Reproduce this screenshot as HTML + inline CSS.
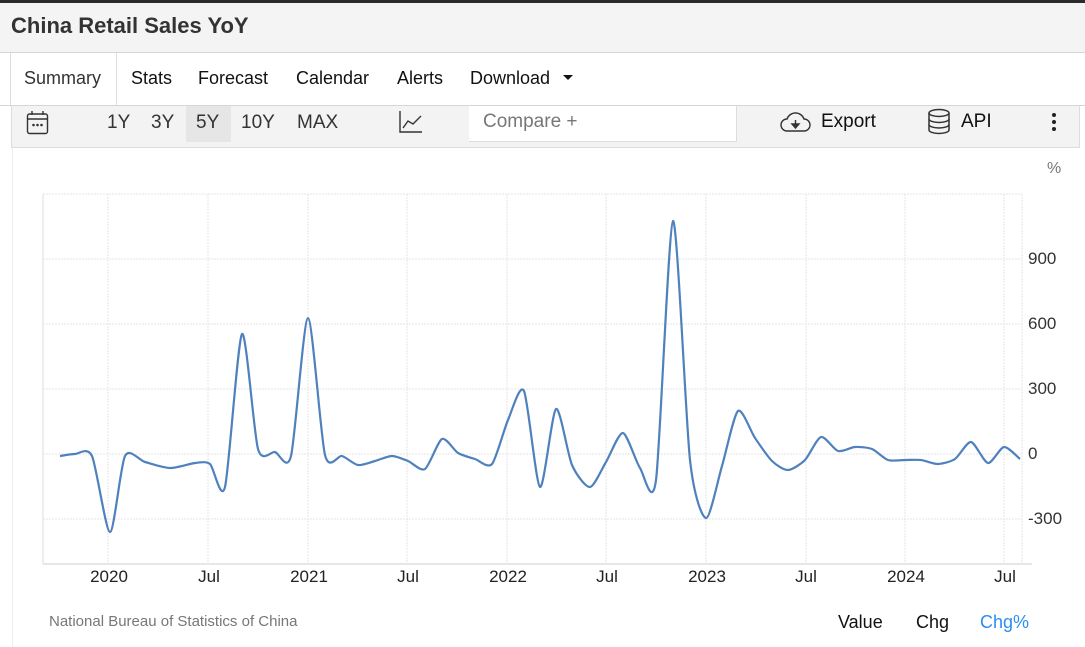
<!DOCTYPE html>
<html><head><meta charset="utf-8"><style>
*{margin:0;padding:0;box-sizing:border-box}
body{width:1085px;height:647px;background:#fff;font-family:"Liberation Sans",Arial,sans-serif;position:relative;overflow:hidden;color:#111}
.abs{position:absolute;white-space:nowrap}
</style></head><body>
<div class="abs" style="left:0;top:0;width:1085px;height:3px;background:#2b2b2b"></div>
<div class="abs" style="left:0;top:3px;width:1085px;height:50px;background:#f4f4f4;border-bottom:1px solid #d6d6d6"></div>
<div class="abs" style="left:11px;top:13px;font-size:22px;font-weight:bold;color:#333">China Retail Sales YoY</div>
<div class="abs" style="left:10px;top:53px;width:107px;height:53px;background:#fff;border-left:1px solid #ddd;border-right:1px solid #ddd"></div>
<div class="abs" style="left:0;top:105px;width:1085px;height:1px;background:#d6d6d6"></div>
<div class="abs" style="left:24px;top:68px;font-size:18px;color:#333">Summary</div>
<div class="abs" style="left:131px;top:68px;font-size:18px">Stats</div>
<div class="abs" style="left:198px;top:68px;font-size:18px">Forecast</div>
<div class="abs" style="left:296px;top:68px;font-size:18px">Calendar</div>
<div class="abs" style="left:397px;top:68px;font-size:18px">Alerts</div>
<div class="abs" style="left:470px;top:68px;font-size:18px">Download</div>
<div class="abs" style="left:563px;top:75px;width:0;height:0;border-left:5px solid transparent;border-right:5px solid transparent;border-top:5px solid #111"></div>
<div class="abs" style="left:11px;top:106px;width:1069px;height:42px;background:#f3f3f3;border:1px solid #ddd;border-top:none"></div>
<svg class="abs" style="left:26px;top:110px" width="24" height="26" viewBox="0 0 24 26" fill="none" stroke="#333" stroke-width="1.4"><rect x="1.5" y="4" width="20" height="19.5" rx="2"/><line x1="1.5" y1="9" x2="21.5" y2="9"/><line x1="6" y1="1" x2="6" y2="5"/><line x1="17" y1="1" x2="17" y2="5"/><circle cx="7.5" cy="15" r=".6" fill="#333"/><circle cx="11.5" cy="15" r=".6" fill="#333"/><circle cx="15.5" cy="15" r=".6" fill="#333"/></svg>
<div class="abs" style="left:186px;top:106px;width:45px;height:36px;background:#e6e6e6"></div>
<div class="abs" style="left:107px;top:112px;font-size:19px;color:#333">1Y</div>
<div class="abs" style="left:151px;top:112px;font-size:19px;color:#333">3Y</div>
<div class="abs" style="left:196px;top:112px;font-size:19px;color:#333">5Y</div>
<div class="abs" style="left:241px;top:112px;font-size:19px;color:#333">10Y</div>
<div class="abs" style="left:297px;top:112px;font-size:19px;color:#333">MAX</div>
<svg class="abs" style="left:398px;top:110px" width="26" height="24" viewBox="0 0 26 24" fill="none" stroke="#333" stroke-width="1.4"><polyline points="2,1 2,22 24,22"/><polyline points="5,18 10,11 15,14 23,6"/></svg>
<div class="abs" style="left:469px;top:106px;width:268px;height:36px;background:#fff;border-right:1px solid #ddd;border-bottom:1px solid #ddd"></div>
<div class="abs" style="left:483px;top:111px;font-size:19px;color:#777">Compare +</div>
<svg class="abs" style="left:779px;top:110px" width="32" height="24" viewBox="0 0 32 24" fill="none" stroke="#333" stroke-width="1.4"><path d="M8 21 H25 A6 6 0 0 0 25 9 A9 9 0 0 0 8 9 A6 6 0 0 0 8 21 Z"/><line x1="16.5" y1="10" x2="16.5" y2="17"/><path d="M13 14 L16.5 18 L20 14 Z" fill="#333"/></svg>
<div class="abs" style="left:821px;top:111px;font-size:19px">Export</div>
<svg class="abs" style="left:927px;top:108px" width="24" height="28" viewBox="0 0 24 28" fill="none" stroke="#333" stroke-width="1.5"><ellipse cx="12" cy="5" rx="10" ry="3.5"/><path d="M2 5 V22 A10 3.5 0 0 0 22 22 V5"/><path d="M2 11 A10 3.5 0 0 0 22 11"/><path d="M2 16.5 A10 3.5 0 0 0 22 16.5"/></svg>
<div class="abs" style="left:961px;top:111px;font-size:19px">API</div>
<div class="abs" style="left:1052px;top:113px;width:4px;height:4px;border-radius:2px;background:#222"></div>
<div class="abs" style="left:1052px;top:120px;width:4px;height:4px;border-radius:2px;background:#222"></div>
<div class="abs" style="left:1052px;top:127px;width:4px;height:4px;border-radius:2px;background:#222"></div>
<div class="abs" style="left:12px;top:148px;width:1px;height:499px;background:#eee"></div>
<div class="abs" style="left:1047px;top:160px;font-size:16px;color:#777">%</div>
<svg class="abs" style="left:0;top:0" width="1085" height="647">
<g stroke="#e6e6e6" stroke-width="1" stroke-dasharray="2,1">
<line x1="43" y1="194" x2="1022" y2="194"/><line x1="43" y1="259" x2="1022" y2="259"/><line x1="43" y1="324" x2="1022" y2="324"/><line x1="43" y1="389" x2="1022" y2="389"/><line x1="43" y1="454" x2="1022" y2="454"/><line x1="43" y1="519" x2="1022" y2="519"/>
<line x1="108" y1="194" x2="108" y2="563"/><line x1="208" y1="194" x2="208" y2="563"/><line x1="308" y1="194" x2="308" y2="563"/><line x1="407" y1="194" x2="407" y2="563"/><line x1="507" y1="194" x2="507" y2="563"/><line x1="606" y1="194" x2="606" y2="563"/><line x1="706" y1="194" x2="706" y2="563"/><line x1="806" y1="194" x2="806" y2="563"/><line x1="905" y1="194" x2="905" y2="563"/><line x1="1004" y1="194" x2="1004" y2="563"/><line x1="1022" y1="194" x2="1022" y2="563"/>
</g>
<line x1="43" y1="194" x2="43" y2="564" stroke="#ddd"/>
<line x1="43" y1="564" x2="1032" y2="564" stroke="#ddd" stroke-width="1.5"/>
<path id="ln" fill="none" stroke="#4f81bd" stroke-width="2.2"/>
<g font-size="17" fill="#333" font-family="Liberation Sans,sans-serif">
<text x="1028" y="264">900</text><text x="1028" y="329">600</text><text x="1028" y="394">300</text><text x="1028" y="459">0</text><text x="1028" y="524">-300</text>
</g>
<g font-size="17" fill="#222" text-anchor="middle" font-family="Liberation Sans,sans-serif">
<text x="109" y="582">2020</text><text x="209" y="582">Jul</text><text x="309" y="582">2021</text><text x="408" y="582">Jul</text><text x="508" y="582">2022</text><text x="607" y="582">Jul</text><text x="707" y="582">2023</text><text x="806" y="582">Jul</text><text x="906" y="582">2024</text><text x="1005" y="582">Jul</text>
</g>
</svg>
<div class="abs" style="left:49px;top:613px;font-size:15px;color:#777">National Bureau of Statistics of China</div>
<div class="abs" style="left:838px;top:612px;font-size:18px">Value</div>
<div class="abs" style="left:916px;top:612px;font-size:18px">Chg</div>
<div class="abs" style="left:980px;top:612px;font-size:18px;color:#2a8ef0">Chg%</div>
<script>
var p=[[60,456],[75,454],[92,456],[110,532],[125,456],[145,462],[170,468],[195,463],[210,464],[225,487],[242,334],[258,449],[275,452],[291,456],[308,318],[325,455],[342,456],[358,465],[375,461],[392,456],[408,461],[425,469],[442,439],[458,453],[475,459],[492,464],[508,420],[524,391],[540,487],[556,409],[572,465],[590,487],[606,462],[623,433],[640,468],[656,480],[673,221],[690,460],[706,518],[722,466],[738,411],[755,438],[772,461],[788,470],[805,460],[821,437],[838,451],[855,447],[872,449],[888,460],[905,460],[921,460],[938,464],[955,459],[971,442],[988,463],[1004,447],[1020,459]];
var k=8,d="M"+p[0][0]+" "+p[0][1];
for(var i=0;i<p.length-1;i++){var a=p[Math.max(i-1,0)],b=p[i],c=p[i+1],e=p[Math.min(i+2,p.length-1)];
d+=" C"+(b[0]+(c[0]-a[0])/k)+" "+(b[1]+(c[1]-a[1])/k)+" "+(c[0]-(e[0]-b[0])/k)+" "+(c[1]-(e[1]-b[1])/k)+" "+c[0]+" "+c[1];}
document.getElementById("ln").setAttribute("d",d);
</script>
</body></html>
